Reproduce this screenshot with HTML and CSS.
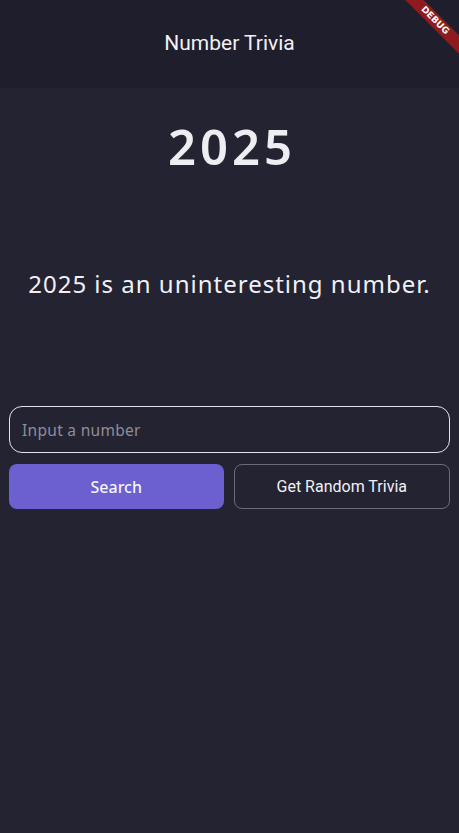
FILE: index.html
```html
<!DOCTYPE html>
<html>
<head>
<meta charset="utf-8">
<link rel="stylesheet" href="styles.css">
</head>
<body>
<div class="app">
  <header class="appbar">Number Trivia</header>
  <main class="content">
    <h1 class="number">2025</h1>
    <p class="trivia">2025 is an uninteresting number.</p>
    <div class="controls">
      <div class="input">Input a number</div>
      <div class="buttons">
        <button class="btn primary">Search</button>
        <button class="btn outline">Get Random Trivia</button>
      </div>
    </div>
  </main>
  <div class="debug"><span>DEBUG</span></div>
</div>
</body>
</html>
```

FILE: styles.css
```css
* { box-sizing: border-box; }
html, body { margin: 0; padding: 0; }
body {
  width: 459px;
  height: 833px;
  background: #242332;
  font-family: "Noto Sans", sans-serif;
  overflow: hidden;
}
.app {
  position: relative;
  height: 833px;
  display: flex;
  flex-direction: column;
}
.appbar {
  height: 88px;
  background: #1f1e2c;
  color: #f1f0f5;
  font-family: Roboto, sans-serif;
  font-size: 21px;
  display: flex;
  align-items: center;
  justify-content: center;
  padding-bottom: 2px;
}
.content {
  display: flex;
  flex-direction: column;
  padding: 0 9px;
}
.number {
  margin: 0;
  margin-top: 25px;
  padding-left: 5px;
  text-align: center;
  color: #eeedf2;
  font-size: 49px;
  font-weight: 600;
  letter-spacing: 4px;
  line-height: 66px;
}
.trivia {
  margin: 0;
  margin-top: 89px;
  text-align: center;
  color: #f1f0f5;
  font-size: 24px;
  line-height: 32px;
  letter-spacing: 1px;
}
.controls {
  margin-top: 106px;
  display: flex;
  flex-direction: column;
  gap: 11px;
}
.input {
  height: 47px;
  border: 1px solid #e4e3ea;
  border-radius: 13px;
  padding-left: 12px;
  display: flex;
  align-items: center;
  color: #8f8d99;
  font-size: 15.5px;
  letter-spacing: 0.3px;
}
.buttons {
  display: flex;
  gap: 10px;
}
.btn {
  flex: 1;
  height: 45px;
  border-radius: 8px;
  font-size: 16px;
  cursor: pointer;
}
.primary {
  background: #6c5fcf;
  border: none;
  color: #f4f3fa;
  font-family: "Noto Sans", sans-serif;
  font-weight: 500;
  padding-top: 2px;
}
.outline {
  background: transparent;
  border: 1px solid #6d6b7a;
  color: #f1f0f5;
  font-family: Roboto, sans-serif;
  font-weight: 400;
}
.debug {
  position: absolute;
  top: 0;
  right: 0;
  width: 80px;
  height: 80px;
  overflow: hidden;
}
.debug span {
  position: absolute;
  top: 14px;
  right: -26px;
  width: 100px;
  height: 13px;
  background: #8e1b20;
  color: #fff;
  font-family: "DejaVu Sans", sans-serif;
  font-size: 9px;
  font-weight: 700;
  line-height: 13px;
  text-align: center;
  transform: rotate(45deg);
}
```
